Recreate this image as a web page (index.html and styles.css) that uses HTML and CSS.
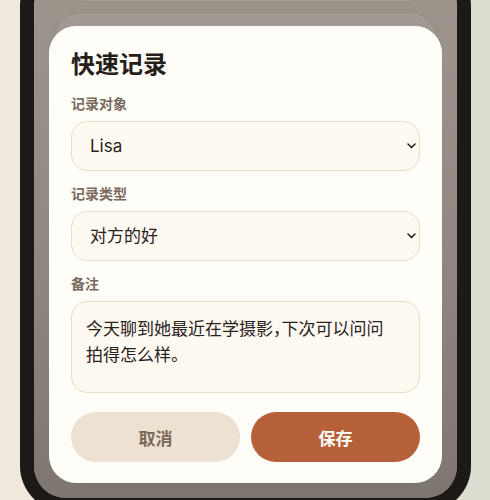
FILE: index.html
```html
<!DOCTYPE html>
<html lang="zh">
<head>
<meta charset="utf-8">
<title>快速记录</title>
<link rel="stylesheet" href="styles.css">
</head>
<body>
<div class="phone">
  <div class="screen">
    <div class="bg-card"></div>
    <div class="overlay"></div>
    <div class="sheet-back"></div>
    <form class="sheet">
      <h1 class="title">快速记录</h1>
      <div class="field">
        <label class="label" for="who">记录对象</label>
        <div class="select-wrap">
          <select id="who" class="control select"><option>Lisa</option></select>
          <svg class="chev" width="9" height="6" viewBox="0 0 9 6"><path d="M1 1 L4.5 4.6 L8 1" fill="none" stroke="#2a211c" stroke-width="1.5" stroke-linecap="round" stroke-linejoin="round"/></svg>
        </div>
      </div>
      <div class="field">
        <label class="label" for="type">记录类型</label>
        <div class="select-wrap">
          <select id="type" class="control select"><option>对方的好</option></select>
          <svg class="chev" width="9" height="6" viewBox="0 0 9 6"><path d="M1 1 L4.5 4.6 L8 1" fill="none" stroke="#2a211c" stroke-width="1.5" stroke-linecap="round" stroke-linejoin="round"/></svg>
        </div>
      </div>
      <div class="field">
        <label class="label" for="note">备注</label>
        <textarea id="note" class="control textarea">今天聊到她最近在学摄影，下次可以问问拍得怎么样。</textarea>
      </div>
      <div class="actions">
        <button type="button" class="btn btn-cancel">取消</button>
        <button type="button" class="btn btn-save">保存</button>
      </div>
    </form>
  </div>
</div>
</body>
</html>
```

FILE: styles.css
```css
* { box-sizing: border-box; }

html, body {
  margin: 0;
  height: 500px;
  overflow: hidden;
}

body {
  background: linear-gradient(90deg, #f1e9de 0%, #e9e5da 50%, #dcddd1 100%);
  font-family: "Inter", "Noto Sans CJK SC", sans-serif;
}

.phone {
  width: 451px;
  height: 552px;
  margin: -40px 0 0 20px;
  padding: 14px;
  background: #1d1916;
  border-radius: 46px;
}

.screen {
  position: relative;
  height: 100%;
  border-radius: 32px;
  overflow: hidden;
  background: #f3ede4;
}

.bg-card {
  margin: 0 32px 0 36px;
  height: 29px;
  background: #fbf7f0;
  border: 1px solid #e6dccd;
  border-top: 0;
  border-radius: 0 0 20px 20px;
}

.overlay {
  position: absolute;
  inset: 0;
  background: linear-gradient(180deg, rgba(40, 32, 25, 0.42) 0%, rgba(40, 32, 25, 0.5) 60%, rgba(40, 32, 25, 0.58) 100%);
}

.sheet-back {
  position: absolute;
  left: 21px;
  right: 21px;
  top: 40px;
  bottom: 15px;
  border-radius: 26px;
  background: rgba(255, 255, 255, 0.05);
  border-top: 1px solid rgba(255, 255, 255, 0.1);
  box-shadow: 0 -2px 8px rgba(0, 0, 0, 0.04);
}

.sheet {
  position: absolute;
  left: 15px;
  right: 15px;
  bottom: 15px;
  height: 457px;
  background: #fffdf8;
  border-radius: 27px;
  padding: 23px 22px 21px;
  display: flex;
  flex-direction: column;
  margin: 0;
}

.title {
  margin: 0 0 13px;
  font-size: 24px;
  line-height: 32px;
  font-weight: 700;
  color: #261e19;
}

.field {
  display: flex;
  flex-direction: column;
  margin-bottom: 13px;
}

.label {
  font-size: 14px;
  line-height: 20px;
  font-weight: 600;
  color: #7a6a5e;
  margin-bottom: 7px;
}

.control {
  width: 100%;
  border: 1px solid #ecdcc6;
  background: #fef9f1;
  border-radius: 16px;
  font-family: "Inter", "Noto Sans CJK SC", sans-serif;
  font-size: 17px;
  color: #2a211c;
  outline: none;
  margin: 0;
}

.select-wrap {
  position: relative;
}

.select {
  -webkit-appearance: none;
  appearance: none;
  height: 50px;
  padding: 0 30px 0 18px;
  line-height: 48px;
}

.chev {
  position: absolute;
  right: 4px;
  top: 22px;
  pointer-events: none;
}

.textarea {
  display: block;
  height: 92px;
  padding: 13px 20px 13px 14px;
  line-height: 26px;
  resize: none;
  overflow: hidden;
  font-family: "Noto Sans CJK SC", sans-serif;
  font-feature-settings: "halt";
}

.actions {
  display: grid;
  grid-template-columns: 1fr 1fr;
  gap: 11px;
  margin-top: 6px;
}

.btn {
  height: 50px;
  border: 0;
  border-radius: 25px;
  font-family: "Inter", "Noto Sans CJK SC", sans-serif;
  font-size: 17px;
  font-weight: 700;
  cursor: pointer;
}

.btn-cancel {
  background: #ede1d1;
  color: #7b6a5c;
}

.btn-save {
  background: #b7613b;
  color: #fffdf8;
}
```
